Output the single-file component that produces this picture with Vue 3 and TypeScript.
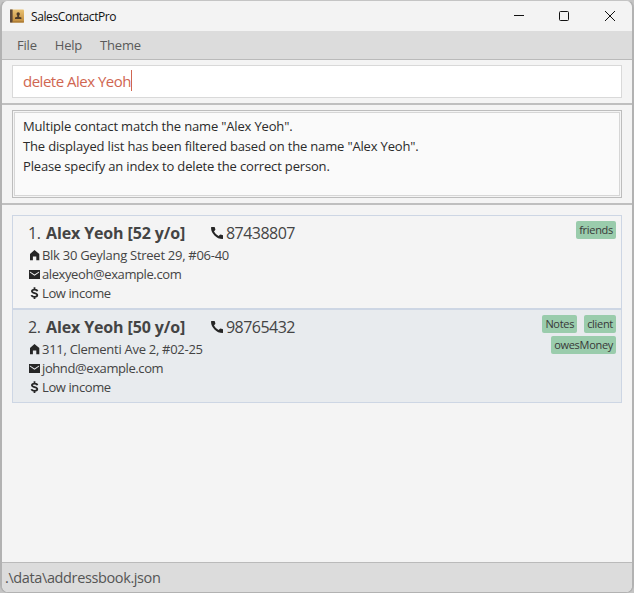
<script setup lang="ts">
interface Contact {
  name: string
  age: number
  phone: string
  address: string
  email: string
  income: string
  tags: string[]
}

const menus: string[] = ['File', 'Help', 'Theme']
const command = 'delete Alex Yeoh'
const messages: string[] = [
  'Multiple contact match the name "Alex Yeoh".',
  'The displayed list has been filtered based on the name "Alex Yeoh".',
  'Please specify an index to delete the correct person.',
]
const contacts: Contact[] = [
  {
    name: 'Alex Yeoh',
    age: 52,
    phone: '87438807',
    address: 'Blk 30 Geylang Street 29, #06-40',
    email: 'alexyeoh@example.com',
    income: 'Low income',
    tags: ['friends'],
  },
  {
    name: 'Alex Yeoh',
    age: 50,
    phone: '98765432',
    address: '311, Clementi Ave 2, #02-25',
    email: 'johnd@example.com',
    income: 'Low income',
    tags: ['Notes', 'client', 'owesMoney'],
  },
]
const savePath = '.\\data\\addressbook.json'
</script>

<template>
  <div class="desktop">
    <div class="window">
      <header class="titlebar">
        <svg class="app-icon" viewBox="0 0 14 14">
          <defs>
            <linearGradient id="cover" x1="0" y1="0" x2="0" y2="1">
              <stop offset="0" stop-color="#e9c274" />
              <stop offset="1" stop-color="#c08a3c" />
            </linearGradient>
          </defs>
          <rect x="0" y="0.5" width="14" height="13" rx="1" fill="url(#cover)" />
          <rect x="0" y="0.5" width="2.6" height="13" fill="#5b4738" />
          <rect x="2.6" y="12.3" width="11.4" height="1.2" fill="#a97932" />
          <circle cx="8.2" cy="5" r="1.7" fill="#4c3a28" />
          <path d="M7.300 6h1.800v1.800l2.300.7v1.600H5V8.500l2.300-.7z" fill="#4c3a28" />
        </svg>
        <span class="title">SalesContactPro</span>
        <div class="controls">
          <svg viewBox="0 0 12 12"><path d="M2 5.500h10" /></svg>
          <svg viewBox="0 0 12 12"><rect x="1.500" y="1.500" width="9" height="9" rx="1" /></svg>
          <svg viewBox="0 0 12 12"><path d="M1 1l10 10M11 1L1 11" /></svg>
        </div>
      </header>

      <nav class="menubar">
        <span v-for="menu in menus" :key="menu">{{ menu }}</span>
      </nav>

      <section class="command-pane">
        <div class="command-box"><span class="command">{{ command }}</span><i class="caret"></i></div>
      </section>

      <section class="result-pane">
        <div class="result-frame">
          <div class="result-box">
            <p v-for="line in messages" :key="line">{{ line }}</p>
          </div>
        </div>
      </section>

      <main class="list-pane">
        <div class="list">
          <article v-for="(c, i) in contacts" :key="c.phone" class="card">
            <div class="info">
              <div class="heading">
                <span class="index">{{ i + 1 }}.</span>
                <span class="name">{{ c.name }} [{{ c.age }} y/o]</span>
                <svg class="phone-icon" viewBox="0 0 12 12">
                  <path d="M.6 0h2.700q.5 0 .6.500l.5 2.300L3 4.400Q4.500 7.300 7.600 9l1.600-1.400 2.300.5q.5.100.5.600v2.700q0 .6-.6.600Q7 12 3.500 8.500T0 .6Q0 0 .6 0z" />
                </svg>
                <span class="phone">{{ c.phone }}</span>
              </div>
              <div class="detail">
                <svg viewBox="0 0 12 12"><path d="M6.500 1l4.800 4v6.300H8.300V7.600H4.900v3.700H2V5z" /></svg>
                <span class="address">{{ c.address }}</span>
              </div>
              <div class="detail">
                <svg viewBox="0 0 12 12"><path d="M1 2h11v9H1zM1.900 3.600v1L6.500 7.700l4.600-3.100v-1L6.500 6.500z" fill-rule="evenodd" /></svg>
                <span class="email">{{ c.email }}</span>
              </div>
              <div class="detail">
                <svg viewBox="0 0 12 12"><path class="dollar" d="M9.400 4.200C9.100 2.900 7.900 2.600 6.500 2.600c-1.600 0-2.600.6-2.600 1.700C3.900 6.500 9.300 5.600 9.300 8c0 1.200-1.200 1.900-2.700 1.900S3.800 9.400 3.500 8.100M6.500.3v2M6.500 10v2" /></svg>
                <span class="income">{{ c.income }}</span>
              </div>
            </div>
            <div class="tags">
              <span v-for="tag in c.tags" :key="tag" class="tag">{{ tag }}</span>
            </div>
          </article>
        </div>
      </main>

      <footer class="status"><span>{{ savePath }}</span></footer>
    </div>
  </div>
</template>

<style>
body {
  background: #c4c4c4;
}
</style>

<style scoped>
* {
  box-sizing: border-box;
}
.desktop {
  width: 634px;
  height: 593px;
  overflow: hidden;
  background: #c4c4c4;
  font-family: "Open Sans", "Noto Sans", sans-serif;
  color: #444;
  white-space: nowrap;
}
.window {
  display: flex;
  flex-direction: column;
  width: 634px;
  height: 593px;
  border: solid #b2b2b2;
  border-width: 1px 2px 1px 2px;
  border-top-color: #c4c4c4;
  border-radius: 8px;
  background: #f4f4f4;
  overflow: hidden;
}
.titlebar {
  display: flex;
  align-items: center;
  height: 30px;
  flex: none;
  padding-left: 8px;
  background: #f3f3f3;
}
.app-icon {
  width: 14px;
  height: 14px;
}
.title {
  margin-left: 7px;
  font-size: 12px;
  color: #111;
  letter-spacing: -0.4px;
}
.controls {
  display: flex;
  gap: 34px;
  margin-left: auto;
  margin-right: 16px;
}
.controls svg {
  width: 12px;
  height: 12px;
  fill: none;
  stroke: #111;
  stroke-width: 1;
}
.menubar {
  display: flex;
  align-items: center;
  gap: 18px;
  height: 29px;
  flex: none;
  padding-left: 15px;
  border-bottom: 1px solid #bababa;
  background: #dcdcdc;
  font-size: 13px;
  letter-spacing: -0.2px;
  color: #5a5a5a;
}
.command-pane {
  height: 45px;
  flex: none;
  padding: 5px 10px;
  border-bottom: 2px solid #bfbfbf;
}
.command-box {
  display: flex;
  align-items: center;
  height: 33px;
  padding: 0 0 2px 10px;
  border: 1px solid #d9d9d9;
  background: #fff;
  font-size: 15px;
  letter-spacing: -0.5px;
  color: #d06651;
}
.caret {
  width: 1px;
  height: 21px;
  background: #d06651;
}
.result-pane {
  height: 100px;
  flex: none;
  padding: 5px 10px;
  border-bottom: 2px solid #bfbfbf;
}
.result-frame {
  height: 88px;
  padding: 1px;
  border: 1px solid #bdbdbd;
}
.result-box {
  height: 84px;
  padding: 3px 8px;
  border: 1px solid #d6d6d6;
  background: #fafafa;
  font-size: 13px;
  line-height: 20px;
  letter-spacing: -0.165px;
  color: #2b2b2b;
}
.result-box p {
  margin: 0;
}
.list-pane {
  flex: 1;
  padding: 10px;
}
.list {
  border: 1px solid #cdd6e4;
  border-width: 0 1px;
}
.card {
  display: flex;
  justify-content: space-between;
  height: 94px;
  padding: 5px 5px 0 15px;
  border: solid #cdd6e4;
  border-width: 1px 0;
}
.card:nth-child(even) {
  background: #e8ebee;
}
.heading {
  display: flex;
  align-items: center;
  height: 24px;
  font-size: 16px;
}
.index {
  width: 18px;
  letter-spacing: -0.5px;
}
.name {
  width: 165px;
  font-weight: 700;
  letter-spacing: -0.13px;
}
.phone-icon {
  width: 12px;
  height: 12px;
  margin-right: 3px;
  fill: #262626;
}
.phone {
  letter-spacing: -0.54px;
}
.detail {
  display: flex;
  align-items: center;
  gap: 2px;
  height: 19px;
  font-size: 13px;
  letter-spacing: -0.4px;
}
.address {
  letter-spacing: -0.28px;
}
.detail svg {
  width: 12px;
  height: 12px;
  fill: #262626;
}
.detail .dollar {
  fill: none;
  stroke: #262626;
  stroke-width: 1.8;
}
.tags {
  display: flex;
  flex-wrap: wrap;
  justify-content: flex-end;
  align-content: flex-start;
  gap: 3px 7px;
  width: 90px;
}
.tag {
  height: 18px;
  padding: 0 3px;
  border-radius: 2px;
  background: #9accac;
  font-size: 11px;
  line-height: 18px;
  letter-spacing: -0.3px;
  color: #383838;
}
.status {
  display: flex;
  align-items: center;
  height: 30px;
  flex: none;
  padding-left: 3px;
  border-top: 1px solid #bababa;
  background: #dcdcdc;
  font-size: 14.5px;
  letter-spacing: -0.38px;
  color: #555;
}
</style>
